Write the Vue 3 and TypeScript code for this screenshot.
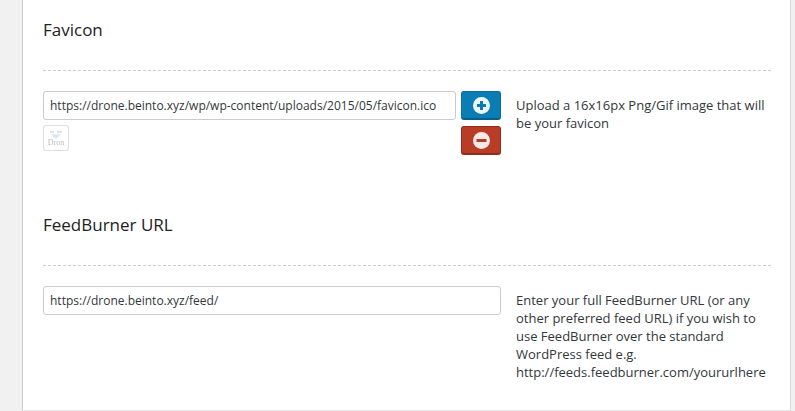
<script setup lang="ts">
const urlPlaceholder = 'https://drone.beinto.xyz/feed/';
const faviconUrl = 'https://drone.beinto.xyz/wp/wp-content/uploads/2015/05/favicon.ico';
</script>

<template>
  <div class="page">
    <div class="panel">
      <section class="section section--favicon">
        <h3 class="section__title">Favicon</h3>
        <div class="section__body">
          <div class="section__controls">
            <div class="upload">
              <div class="upload__field">
                <input class="input" type="text" :value="faviconUrl" />
                <div class="thumb">
                  <svg class="thumb__mark" width="16" height="9" viewBox="0 0 16 9">
                    <path d="M2 1h4v2H2zM9 1h5v2H9z" fill="#e2e2e2" />
                    <path d="M3 4l5 .5 5-.5-3 3-2 2-2-2z" fill="#d3e6f2" />
                  </svg>
                  <span class="thumb__text">Dron</span>
                </div>
              </div>
              <div class="upload__buttons">
                <button class="btn btn--add" aria-label="Add">
                  <svg width="17" height="17" viewBox="0 0 17 17">
                    <circle cx="8.5" cy="8.5" r="8.5" fill="#eef6fa" />
                    <path d="M7 4h3v3h3v3h-3v3H7v-3H4V7h3z" fill="#0a7db0" />
                  </svg>
                </button>
                <button class="btn btn--remove" aria-label="Remove">
                  <svg width="17" height="17" viewBox="0 0 17 17">
                    <circle cx="8.5" cy="8.5" r="8.5" fill="#f6e9e6" />
                    <rect x="3.5" y="7" width="10" height="3" fill="#b73c26" />
                  </svg>
                </button>
              </div>
            </div>
          </div>
          <p class="section__desc">Upload a 16x16px Png/Gif image that will be your favicon</p>
        </div>
      </section>
      <section class="section">
        <h3 class="section__title">FeedBurner URL</h3>
        <div class="section__body">
          <div class="section__controls">
            <input class="input input--full" type="text" :value="urlPlaceholder" />
          </div>
          <p class="section__desc">Enter your full FeedBurner URL (or any other preferred feed URL) if you wish to use FeedBurner over the standard WordPress feed e.g. http://feeds.feedburner.com/yoururlhere</p>
        </div>
      </section>
    </div>
  </div>
</template>

<style>
body {
  background: #f1f1f1;
}
</style>

<style scoped>
.page {
  height: 411px;
  padding: 0 4px 0 22px;
  box-sizing: border-box;
  font-family: "Open Sans", sans-serif;
  overflow: hidden;
}
.panel {
  height: 411px;
  box-sizing: border-box;
  background: #fff;
  border-right: 1px solid #d8d8d8;
  border-left: 1px solid #ccc;
  border-bottom: 1px solid #e5e5e5;
  padding: 0 19px 0 20px;
}
.section {
  height: 195px;
  padding-top: 18px;
  box-sizing: border-box;
}
.section__title {
  margin: 0;
  font-size: 17px;
  font-weight: 400;
  line-height: 23px;
  color: #222;
}
.section__body {
  display: flex;
  margin-top: 29px;
  padding-top: 20px;
  border-top: 1px dashed #ccc;
}
.section__controls {
  width: 458px;
  flex: none;
}
.section__desc {
  margin: 0 0 0 15px;
  padding-top: 5px;
  width: 254px;
  font-size: 13px;
  line-height: 18px;
  color: #32373c;
}
.upload {
  display: flex;
  gap: 5px;
}
.upload__field {
  flex: 1;
  min-width: 0;
}
.upload__buttons {
  display: flex;
  flex-direction: column;
  gap: 6px;
  flex: none;
}
.input {
  display: block;
  width: 100%;
  height: 29px;
  padding: 0 6px;
  box-sizing: border-box;
  border: 1px solid #ccc;
  border-radius: 3px;
  background: #fff;
  font-family: inherit;
  font-size: 12px;
  color: #32373c;
  outline: none;
}
.thumb {
  display: flex;
  flex-direction: column;
  align-items: center;
  justify-content: center;
  width: 26px;
  height: 26px;
  margin-top: 5px;
  box-sizing: border-box;
  border: 1px solid #ddd;
  border-radius: 3px;
}
.thumb__mark {
  display: block;
  filter: blur(0.4px);
}
.thumb__text {
  font-family: "Liberation Serif", serif;
  font-size: 8px;
  line-height: 8px;
  color: #bbb;
  filter: blur(0.3px);
}
.btn {
  display: flex;
  align-items: center;
  justify-content: center;
  width: 40px;
  height: 29px;
  padding: 0;
  box-sizing: border-box;
  border: 1px solid;
  border-radius: 3px;
}
.btn--add {
  background: #0a7db5;
  border-color: #0a6f9f;
  border-bottom: 2px solid #075f88;
}
.btn--remove {
  background: #b93c26;
  border-color: #8f2d1c;
  border-bottom-width: 2px;
}
</style>
